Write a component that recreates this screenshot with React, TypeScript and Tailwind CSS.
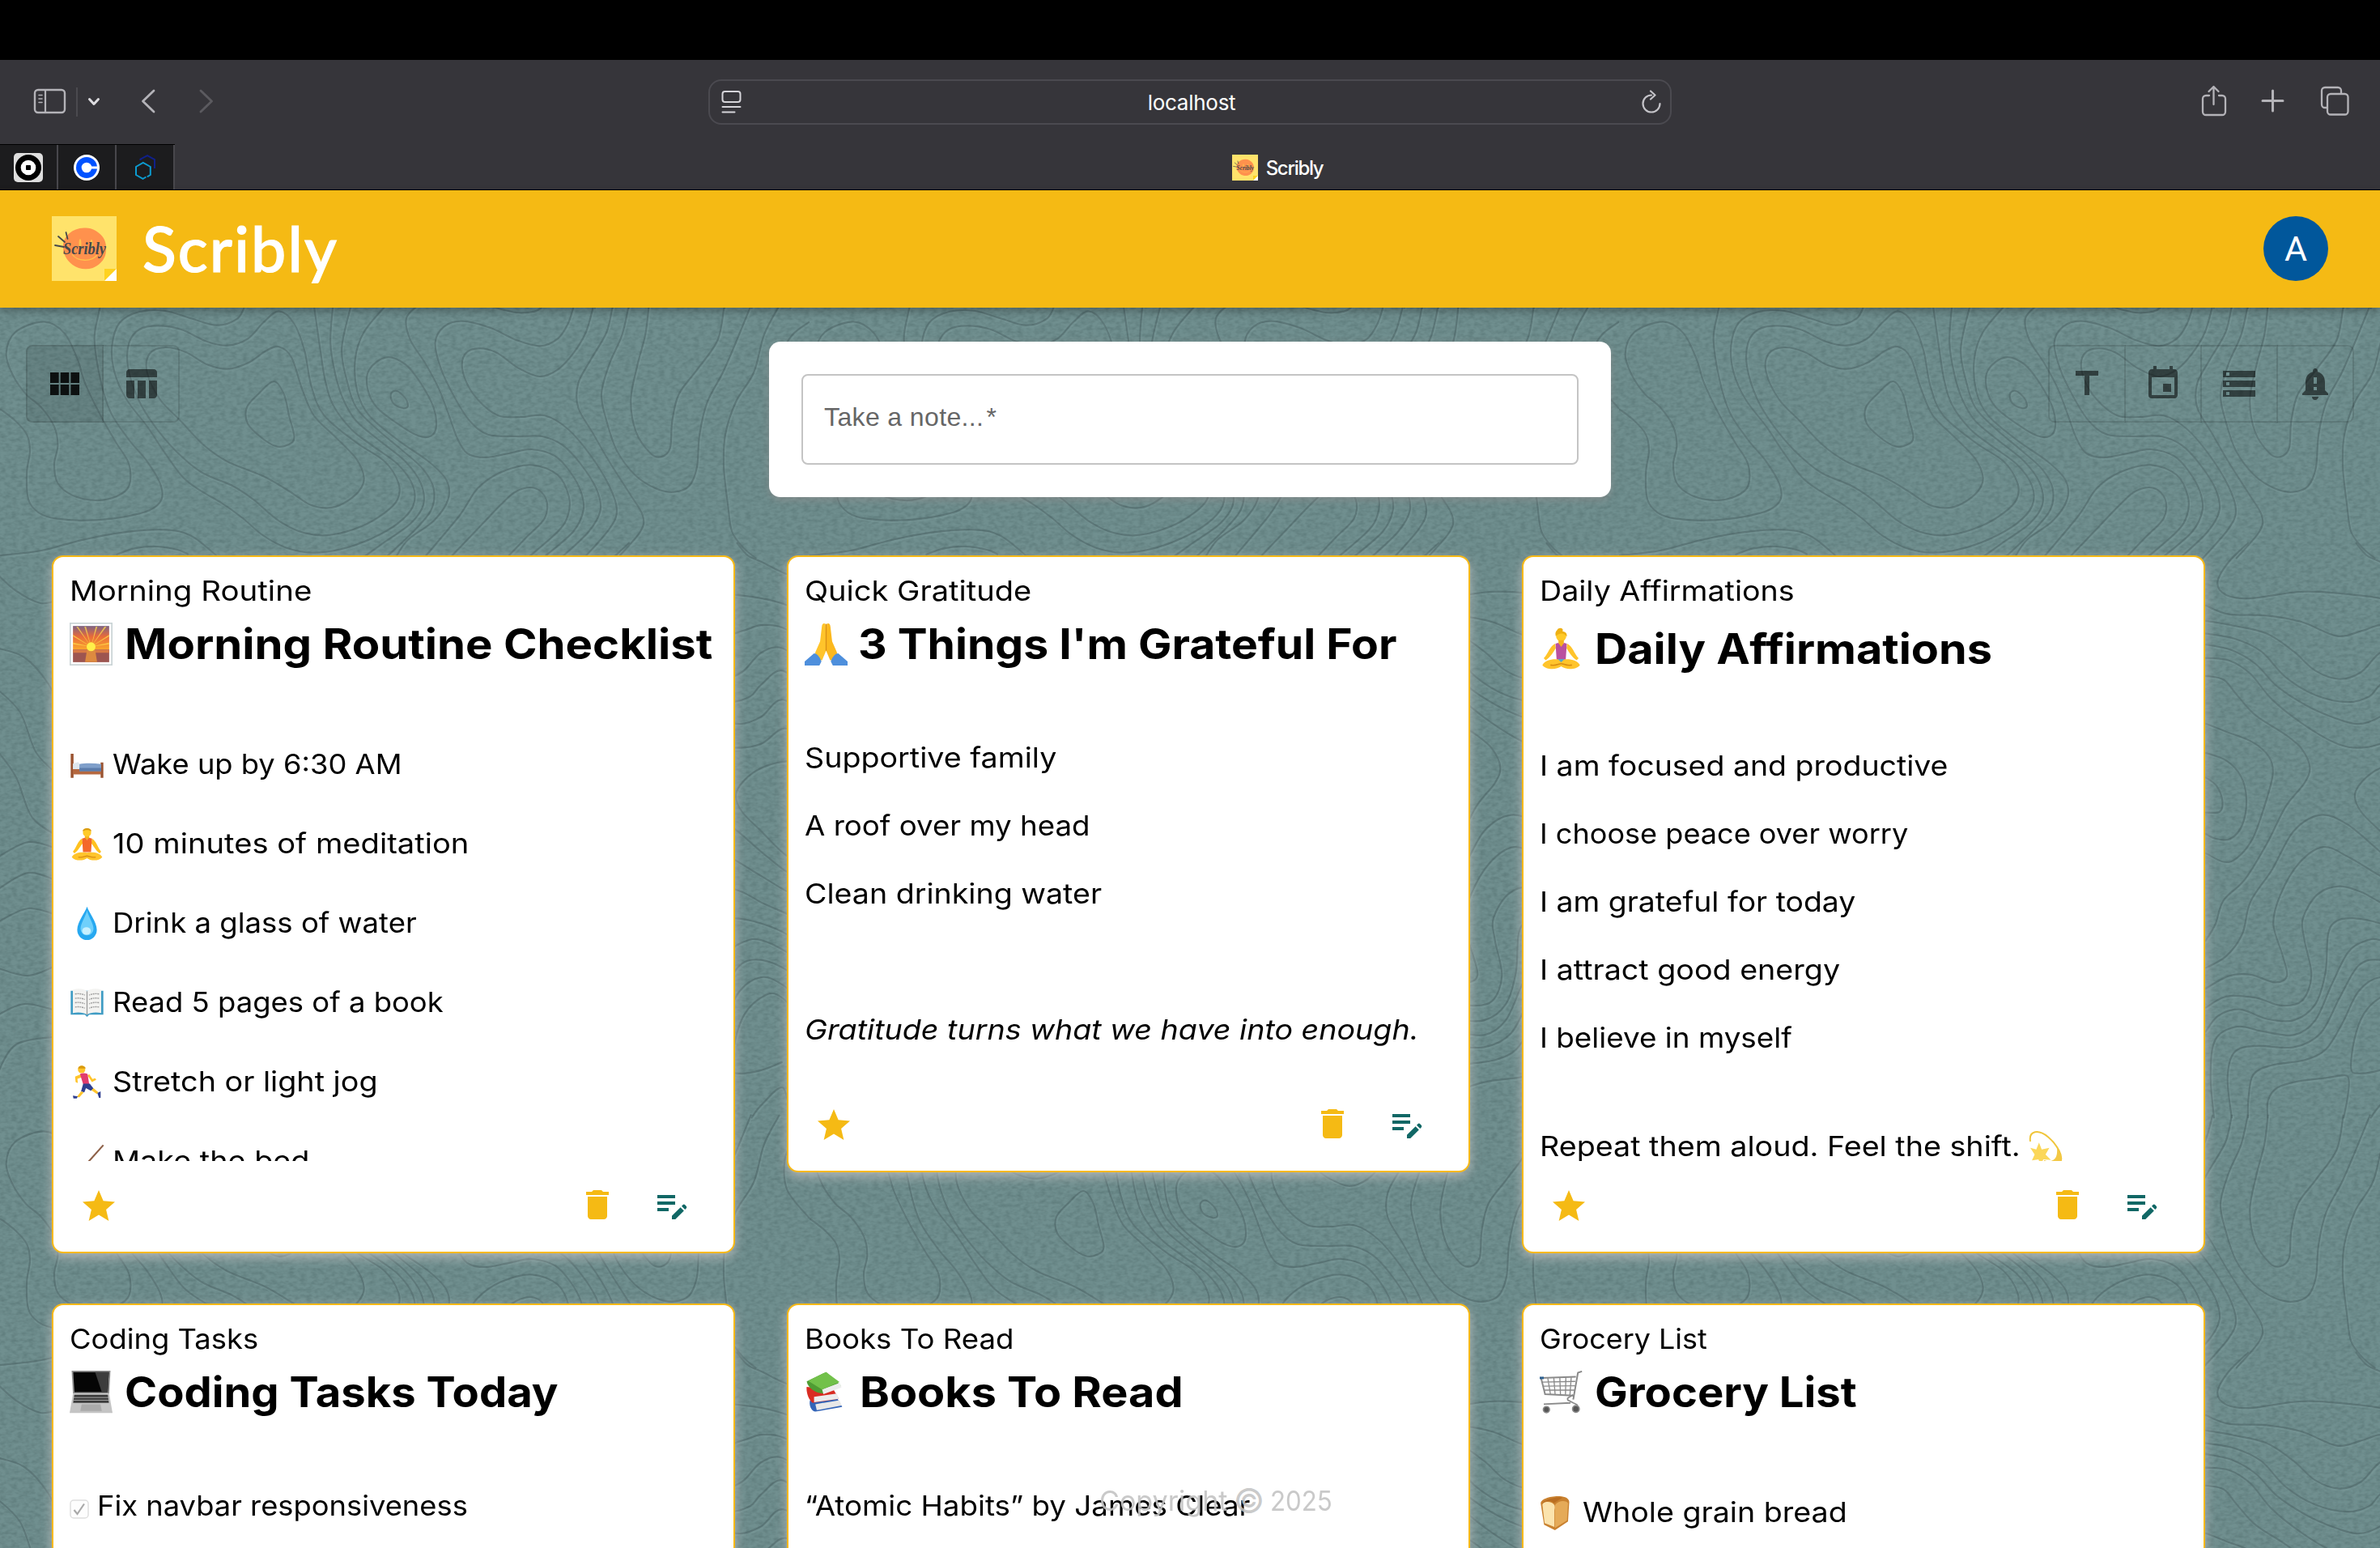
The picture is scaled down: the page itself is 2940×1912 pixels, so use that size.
import { useLayoutEffect, useRef, type ReactNode } from "react";
import {
  MdDelete,
  MdEditNote,
  MdEvent,
  MdNotificationImportant,
  MdStar,
  MdStorage,
  MdTableChart,
  MdTitle,
  MdViewModule,
} from "react-icons/md";

type Pt = [number, number];

/* ---------- Topographic background ---------- */

function smooth(points: Pt[], closed: boolean): string {
  const n = points.length;
  const at = (i: number): Pt =>
    closed ? points[(i + n) % n] : points[Math.max(0, Math.min(n - 1, i))];
  let d = `M${points[0][0].toFixed(1)} ${points[0][1].toFixed(1)}`;
  const segments = closed ? n : n - 1;
  for (let i = 0; i < segments; i++) {
    const [a, b, c, e] = [at(i - 1), at(i), at(i + 1), at(i + 2)];
    const c1 = [b[0] + (c[0] - a[0]) / 6, b[1] + (c[1] - a[1]) / 6];
    const c2 = [c[0] - (e[0] - b[0]) / 6, c[1] - (e[1] - b[1]) / 6];
    d += `C${c1[0].toFixed(1)} ${c1[1].toFixed(1)} ${c2[0].toFixed(1)} ${c2[1].toFixed(1)} ${c[0].toFixed(1)} ${c[1].toFixed(1)}`;
  }
  return d;
}

const bandClosed: Pt[][] = [
  [[12,200],[30,120],[85,82],[125,125],[150,220],[165,310],[195,430],[225,530],[250,610],[250,690],[225,730],[185,744],[140,725],[112,680],[105,610],[112,540],[105,470],[80,400],[50,350],[25,280]],
  [[250,160],[270,110],[305,97],[350,110],[400,155],[440,170],[480,145],[510,85],[540,43],[570,90],[590,190],[603,320],[628,430],[690,530],[745,600],[772,680],[770,740],[745,790],[700,840],[640,872],[590,865],[540,820],[490,740],[450,690],[390,640],[340,560],[300,470],[268,370],[248,250]],
  [[290,200],[320,177],[360,195],[400,240],[440,257],[480,235],[515,190],[540,175],[565,215],[585,330],[608,430],[650,510],[690,590],[705,660],[695,710],[665,755],[635,772],[600,760],[560,710],[510,655],[440,600],[395,540],[350,450],[310,370],[285,270]],
  [[530,303],[550,350],[560,430],[570,510],[558,538],[535,544],[505,510],[480,460],[478,400],[500,350]],
  [[748,214],[785,240],[815,310],[840,400],[845,470],[835,505],[810,505],[770,460],[730,400],[712,330],[715,260]],
  [[768,338],[785,365],[790,395],[780,402],[762,385],[757,350]],
];

const bandOpen: Pt[][] = [
  [[0,405],[30,450],[52,500],[58,560],[52,640],[55,740],[75,790],[110,812],[170,818],[240,805],[290,780],[313,740],[310,680],[285,600],[250,520],[215,420],[195,300],[183,150],[190,60],[195,20]],
  [[475,20],[460,70],[420,95],[370,70],[320,42],[270,45],[232,85],[217,170],[222,270],[245,370],[285,470],[320,570],[355,660],[390,710],[430,755],[470,810],[510,875],[555,920],[605,938],[660,925],[720,885],[770,830],[800,765],[800,690],[770,610],[720,540],[680,480],[645,390],[630,300],[620,180],[608,20]],
  [[645,20],[640,160],[650,280],[665,370],[690,450],[740,530],[785,600],[815,680],[820,760],[795,830],[740,905],[700,960]],
  [[680,20],[662,180],[672,300],[690,400],[730,480],[780,560],[820,630],[840,700],[835,780],[800,860],[745,960]],
  [[748,20],[705,120],[688,220],[692,340],[715,430],[770,520],[830,600],[865,670],[868,740],[840,820],[790,890],[765,960]],
  [[810,20],[787,70],[795,150],[825,240],[850,330],[870,430],[885,510],[905,570],[940,585],[985,570],[1030,555],[1075,580],[1105,640],[1125,710],[1130,780],[1110,860],[1050,960]],
  [[955,28],[1000,48],[1035,44],[1050,28]],
  [[1112,20],[1100,90],[1080,145],[1045,172],[1000,150],[950,105],[895,80],[860,100],[843,160],[855,260],[880,360],[910,450],[945,500],[1000,507],[1050,507],[1090,540],[1125,610],[1155,700],[1163,780],[1140,860],[1085,960]],
  [[1150,20],[1135,120],[1110,200],[1080,260],[1045,285],[1005,255],[960,195],[920,182],[897,215],[900,290],[925,370],[965,430],[1010,435],[1055,430],[1100,480],[1145,580],[1180,690],[1195,780],[1180,850],[1130,960]],
  [[1187,20],[1175,120],[1145,220],[1120,310],[1120,400],[1150,500],[1180,600],[1220,720],[1245,800],[1240,860],[1195,960]],
  [[1218,20],[1205,130],[1180,240],[1165,350],[1175,450],[1195,560],[1230,650],[1270,700],[1305,713],[1335,690],[1350,620],[1355,500],[1370,380],[1400,270],[1425,160],[1455,20]],
  [[1257,20],[1250,130],[1235,240],[1222,370],[1232,490],[1260,570],[1280,583],[1298,550],[1302,450],[1315,350],[1350,260],[1390,150],[1403,20]],
  [[1510,20],[1480,130],[1460,270],[1425,380],[1405,500],[1402,620],[1410,760],[1418,860],[1440,920],[1465,960]],
  [[1568,82],[1535,130],[1520,190],[1525,300],[1568,405]],
  [[820,960],[890,800],[925,700],[970,640],[1030,613],[1080,650],[1102,730],[1100,800],[1080,860],[1020,960]],
  [[870,960],[930,840],[970,760],[1000,710],[1035,698],[1058,740],[1055,810],[1020,880],[980,960]],
  [[0,948],[80,930],[160,890],[240,862],[320,853],[370,875],[420,950]],
  [[225,945],[260,922],[305,915],[345,928],[365,945]],
];

const stripOpen: Pt[][] = [
  [[233,0],[160,30],[118,62],[150,82],[240,87],[420,77],[560,79],[720,87],[830,100],[910,120]],
  [[630,0],[670,20],[720,30],[820,50],[910,55]],
  [[72,98],[160,112],[300,114],[430,124],[560,146],[650,138],[720,129],[800,133],[910,160]],
  [[72,122],[180,130],[300,142],[400,170],[480,200],[570,213],[650,202],[720,172],[800,165],[910,200]],
  [[72,142],[180,150],[280,170],[370,210],[480,238],[600,249],[680,240],[720,222],[800,200],[910,240]],
  [[72,159],[170,168],[260,190],[340,225],[450,255],[560,275],[640,283],[720,272],[800,245],[910,280]],
  [[72,180],[160,184],[240,205],[320,245],[430,282],[540,310],[620,320],[720,314],[810,290],[910,320]],
  [[72,208],[140,214],[190,238],[260,270],[370,300],[430,322],[460,350],[440,375],[370,412],[300,470],[220,525],[140,558],[110,595],[72,622]],
  [[72,282],[150,295],[250,312],[310,335],[323,360],[300,400],[250,460],[190,492],[140,498],[72,484]],
  [[72,328],[150,340],[205,365],[225,400],[210,440],[165,462],[110,462],[72,454]],
  [[72,366],[115,380],[136,403],[125,420],[72,421]],
  [[910,340],[800,342],[720,352],[660,370],[627,393],[650,420],[720,450],[820,490],[910,500]],
  [[72,664],[150,645],[210,610],[240,560],[320,510],[400,450],[500,425],[600,440],[720,482],[820,515],[910,530]],
  [[72,696],[160,676],[240,674],[330,686],[375,676],[360,645],[325,595],[350,550],[420,500],[510,475],[600,490],[720,520],[820,545],[910,560]],
  [[72,726],[150,708],[260,710],[350,722],[430,715],[466,675],[440,620],[435,585],[490,548],[570,536],[650,545],[720,561],[820,580],[910,600]],
  [[72,764],[120,738],[200,728],[300,743],[400,745],[480,720],[518,670],[528,610],[560,590],[620,586],[720,594],[820,612],[910,640]],
  [[105,898],[92,830],[110,775],[190,755],[280,762],[400,768],[480,745],[540,690],[600,640],[660,622],[720,620],[820,640],[910,670]],
  [[171,898],[155,835],[180,795],[260,785],[400,787],[500,765],[570,710],[640,660],[720,651],[820,668],[910,700]],
  [[910,730],[800,690],[720,678],[640,700],[580,750],[520,790],[440,807],[320,815],[250,830],[232,870],[231,898]],
  [[304,898],[305,870],[340,850],[420,840],[520,835],[590,831],[605,840],[600,865],[585,898]],
  [[910,800],[860,740],[780,705],[720,710],[660,735],[625,775],[613,820],[640,828],[720,823],[800,810]],
  [[684,898],[720,878],[800,850],[830,898]],
];

const marginOpen: Pt[][] = [
  [[-5,708],[20,730],[50,745],[75,740]],
  [[-5,800],[30,812],[60,845],[75,880]],
  [[-5,850],[25,880],[45,930],[75,960]],
  [[-5,925],[20,960],[40,1010],[75,1035]],
  [[-5,1060],[35,1040],[75,1050]],
  [[-5,1100],[35,1078],[75,1090]],
  [[-5,1140],[35,1122],[75,1132]],
  [[-5,1195],[35,1205],[75,1190]],
  [[-5,1255],[30,1240],[75,1250]],
  [[-5,1330],[20,1290],[75,1280]],
];

const bandMap = ([x, y]: Pt): Pt => [x / 1.568, y / 3 + 370 - 234];
const stripMap = ([x, y]: Pt): Pt => [700 + x / 3, y / 1.2625 + 670 - 234];
const marginMap = ([x, y]: Pt): Pt => [x, y - 234];

const bandPath =
  bandClosed.map((p) => smooth(p.map(bandMap), true)).join("") +
  bandOpen.map((p) => smooth(p.map(bandMap), false)).join("");
const stripPath =
  stripOpen.map((p) => smooth(p.map(stripMap), false)).join("") +
  marginOpen.map((p) => smooth(p.map(marginMap), false)).join("");

function Topography() {
  return (
    <svg className="absolute inset-0 h-full w-full" viewBox="0 380 2940 1532" aria-hidden="true">
      <defs>
        <filter id="grain" x="0" y="0" width="100%" height="100%" colorInterpolationFilters="sRGB">
          <feTurbulence type="fractalNoise" baseFrequency="0.14 0.24" numOctaves="2" seed="4" />
          <feColorMatrix values="0 0 0 0 0.2  0 0 0 0 0.3  0 0 0 0 0.3  1.4 0 0 0 -0.5" />
        </filter>
        <pattern id="contours" x="0" y="234" width="1000" height="1000" patternUnits="userSpaceOnUse">
          <g fill="none" strokeWidth="2.2">
            <g stroke="#84a3a3" strokeOpacity="0.25" transform="translate(1.5 2)">
              <path d={bandPath} />
              <path d={stripPath} />
              <path d={stripPath} transform="translate(0 -1000)" />
            </g>
            <g stroke="#455b5e" strokeOpacity="0.46">
              <path d={bandPath} />
              <path d={stripPath} />
              <path d={stripPath} transform="translate(0 -1000)" />
            </g>
          </g>
        </pattern>
      </defs>
      <rect y="380" width="2940" height="1532" fill="#708f8f" />
      <rect y="380" width="2940" height="1532" filter="url(#grain)" opacity="0.36" />
      <rect y="380" width="2940" height="1532" fill="url(#contours)" />
    </svg>
  );
}

/* ---------- Text fitted to a set width ---------- */

type FitProps = { w: number; className?: string; children: string };

/* Spreads the letters until the text is w pixels wide. */
function Track({ w, className = "", children }: FitProps) {
  const ref = useRef<HTMLSpanElement>(null);
  useLayoutEffect(() => {
    const el = ref.current;
    if (!el) return;
    el.style.letterSpacing = "0px";
    const natural = el.getBoundingClientRect().width;
    el.style.letterSpacing = `${(w - natural) / (children.length - 1)}px`;
  }, [w, children]);
  return (
    <span ref={ref} className={`inline-block shrink-0 whitespace-nowrap ${className}`}>
      {children}
    </span>
  );
}

/* Widens the glyphs until the text is w pixels wide. */
function Wide({ w, className = "", children }: FitProps) {
  const box = useRef<HTMLSpanElement>(null);
  const ref = useRef<HTMLSpanElement>(null);
  useLayoutEffect(() => {
    const el = ref.current;
    if (!el || !box.current) return;
    el.style.transform = "none";
    box.current.style.width = `${w}px`;
    el.style.transform = `scaleX(${w / el.offsetWidth})`;
  }, [w, children]);
  return (
    <span ref={box} className={`inline-block shrink-0 whitespace-nowrap ${className}`}>
      <span ref={ref} className="inline-block origin-left">{children}</span>
    </span>
  );
}

/* ---------- Brand ---------- */

function Logo({ className }: { className: string }) {
  return (
    <svg className={className} viewBox="0 0 80 80">
      <rect width="80" height="80" fill="#ffe36b" />
      <path d="M40 14.500c9-.8 17 4 22 10 5 6 6 14 4.500 22-1.500 8-9 15-16 17.500-8 2.500-18 1.500-25-4-8-6-12-15-11.500-24C14.500 25 25 15 40 14.500z" fill="#ff914d" />
      <ellipse cx="35" cy="34" rx="1.500" ry="6" fill="#ffc24d" />
      <ellipse cx="49" cy="34" rx="1.500" ry="5" fill="#ffc24d" />
      <path d="M25 47c6 9 24 10 31 1" fill="none" stroke="#ffc24d" strokeWidth="1.300" />
      <path d="M4 36l11 2M8 25l8 7M17.500 20l2 8" stroke="#45484b" strokeWidth="1.800" strokeLinecap="round" />
      <text x="14" y="47" fontFamily="'Liberation Serif', serif" fontStyle="italic" fontWeight="700" fontSize="20" textLength="53" lengthAdjust="spacingAndGlyphs" fill="#45484b">
        Scribly
      </text>
      <path d="M65 65h15L65 80z" fill="#ffd21f" />
      <path d="M80 65v15H65z" fill="#fff" />
    </svg>
  );
}

/* ---------- Browser chrome ---------- */

function BrowserBar() {
  return (
    <div className="h-[235px] bg-[#36353a] font-['Inter',sans-serif]">
      <div className="h-[74px] bg-black" />
      <div className="grid h-[104px] grid-cols-[875px_1190px_875px] items-start">
        <div className="flex pt-[30px]">
          <svg className="h-[48px] w-[300px]" viewBox="0 104 300 48" fill="none" stroke="#b4b3b8" strokeLinecap="round" strokeLinejoin="round">
            <rect x="43" y="111" width="37" height="28" rx="4" strokeWidth="2.400" />
            <path d="M56 111v28" strokeWidth="2.200" />
            <path d="M48 117.500h4M48 122h4M48 126.500h4" strokeWidth="1.600" />
            <path d="M95 108v36" stroke="#4b4a4f" strokeWidth="2" strokeLinecap="butt" />
            <path d="M110.500 122.500l5.500 6 5.500-6" stroke="#dddce0" strokeWidth="3" />
            <path d="M190 112l-13.500 13L190 138" strokeWidth="2.800" />
            <path d="M248 112l13.500 13L248 138" stroke="#5b5a5f" strokeWidth="2.800" />
          </svg>
        </div>
        <div className="mt-6 flex h-[56px] items-center justify-between rounded-[16px] border-2 border-[#4b4a50] pr-[10px] pl-[14px]">
          <svg className="h-[30px] w-[26px]" viewBox="0 0 26 30" fill="none" stroke="#d6d5da" strokeWidth="2" strokeLinecap="round">
            <rect x="1.500" y="2" width="22" height="13" rx="3" />
            <path d="M1.500 21h22M1.500 27.500h15" />
          </svg>
          <Track w={109} className="pt-[2px] text-[26px] leading-[30px] text-white">localhost</Track>
          <svg className="h-[30px] w-[26px]" viewBox="0 0 26 30" fill="none" stroke="#c4c3c8" strokeWidth="2.200" strokeLinecap="round" strokeLinejoin="round">
            <path d="M13 6.500a10.500 10.500 0 1 0 10.500 10.500" />
            <path d="M12 1.500l5.500 5-5.500 5" />
          </svg>
        </div>
        <div className="flex justify-end pt-[26px] pr-[36px]">
          <svg className="h-[48px] w-[190px]" viewBox="2714 100 190 48" fill="none" stroke="#b4b3b8" strokeWidth="2.300" strokeLinecap="round" strokeLinejoin="round">
            <path d="M2729 118h-4a4 4 0 0 0-4 4v16a4 4 0 0 0 4 4h20a4 4 0 0 0 4-4v-16a4 4 0 0 0-4-4h-4M2734.500 129v-21M2728.500 113l6-6 6 6" />
            <path d="M2795 124.500h25M2807.500 112v25" strokeWidth="3" />
            <rect x="2875" y="116" width="25.500" height="25.500" rx="4" />
            <path d="M2874 133h-2a4 4 0 0 1-4-4v-17a4 4 0 0 1 4-4h16a4 4 0 0 1 4 4v3" />
          </svg>
        </div>
      </div>
      <div className="flex h-[57px] border-b border-black">
        <div className="flex border-t border-black bg-[#1c1c1e]">
          <div className="flex w-[72px] items-center justify-center border-r-2 border-[#48474c]">
            <svg className="size-9" viewBox="0 0 36 36">
              <rect width="36" height="36" rx="5" fill="#dedede" />
              <circle cx="18" cy="18" r="16" fill="#000" />
              <circle cx="18" cy="18" r="9.300" fill="#fff" />
              <rect x="15" y="15" width="6" height="6" rx=".8" fill="#000" />
            </svg>
          </div>
          <div className="flex w-[72px] items-center justify-center border-r-2 border-[#48474c]">
            <svg className="size-9" viewBox="0 0 36 36">
              <circle cx="18" cy="18" r="16" fill="#fff" />
              <circle cx="18" cy="18" r="13" fill="#0052ff" />
              <circle cx="18" cy="18" r="6.300" fill="#fff" />
              <rect x="22" y="16.500" width="12" height="3" fill="#fff" />
            </svg>
          </div>
          <div className="flex w-[72px] items-center justify-center border-r-2 border-[#48474c]">
            <svg className="size-9" viewBox="0 0 36 36" fill="none" strokeWidth="2">
              <path d="M12.500 9V7.500l8.500-4.300 9 5V19" stroke="#10208a" />
              <path d="M19.500 29.500l-4 2.300L7 27V17l8.800-5 9 5v10l-4 2.300" stroke="#0c9bd0" />
            </svg>
          </div>
        </div>
        <div className="flex flex-1 items-center justify-center gap-[10px] pt-px">
          <Logo className="size-8" />
          <Track w={72} className="pt-[2px] text-[24px] leading-[30px] font-medium text-white">Scribly</Track>
        </div>
      </div>
    </div>
  );
}

/* ---------- Emoji drawings ---------- */

function Art({ children, big = false }: { children: ReactNode; big?: boolean }) {
  return (
    <svg viewBox="0 0 32 32" className={big ? "size-[53px] shrink-0" : "size-[43px] shrink-0"}>
      {children}
    </svg>
  );
}

const art: Record<string, ReactNode> = {
  sunrise: (
    <>
      <defs>
        <linearGradient id="sky" x1="0" x2="0" y1="0" y2="1">
          <stop offset="0" stopColor="#7d6484" />
          <stop offset=".45" stopColor="#e86a3a" />
          <stop offset="1" stopColor="#fba72c" />
        </linearGradient>
      </defs>
      <rect x=".5" y=".5" width="31" height="31" fill="#fff" stroke="#c9d3d5" />
      <rect x="2.500" y="2.500" width="27" height="17.500" fill="url(#sky)" />
      <path d="M16 18L5 3h1.200zM16 18L11 3h1.200zM16 18l3.500-15h1.200zM16 18L26 3h1.500zM16 18L2.500 9v1.200zM16 18l13.500-9v1.200zM16 18l-13.500-3v1.200zM16 18l13.500-3v1.200z" fill="#ffd84a" opacity=".75" />
      <rect x="2.500" y="20" width="27" height="9.500" fill="#9d5550" />
      <path d="M2.500 20h27v2.500h-27z" fill="#d97a45" />
      <path d="M13 20h6l1.500 9.500h-9z" fill="#dd8a40" />
      <circle cx="16" cy="18" r="3.300" fill="#fff04a" />
    </>
  ),
  bed: (
    <>
      <path d="M1 6h2.600v22H1zM28.500 14H31v14h-2.500z" fill="#9a5330" />
      <path d="M3 20h26v5H3z" fill="#b5683f" />
      <path d="M3 15l5-1.500 2 3.500v3H3z" fill="#dfe7ee" />
      <path d="M9 15.500c5-1 13-1 20 0V22H9z" fill="#7f9fca" />
      <path d="M9 19h20v3H9z" fill="#5b7cab" />
    </>
  ),
  yogi: (
    <>
      <path d="M14 8h4v4h-4z" fill="#f5b21c" />
      <circle cx="16" cy="5.500" r="3.800" fill="#ffca28" />
      <path d="M12 4.500C12 .5 20 .5 20 4.500c-2-1.700-6-1.700-8 0z" fill="#d99a0e" />
      <path d="M11.500 11c-4 2-5 8-8.500 12l1.500 1.500c4-3 5.500-7 7.500-9zM20.500 11c4 2 5 8 8.500 12l-1.500 1.500c-4-3-5.500-7-7.500-9z" fill="#ffc21f" />
      <path d="M11.500 11l2.500-.7 2 2 2-2 2.500 .7-.8 12.500h-7.400z" fill="#f4682a" />
      <path d="M2 28c2-4 8-5 14-4 6-1 12 0 14 4-3 4-11 3.500-14 1-3 2.500-11 3-14-1z" fill="#ffc42b" />
      <path d="M8 28c4 1 6-1 8-1s4 2 8 1" stroke="#d98d12" fill="none" />
    </>
  ),
  drop: (
    <>
      <path d="M16 .5c2 6 9 14 9 21.500a9 9.300 0 0 1-18 0C7 14.500 14 6.500 16 .5z" fill="#27a8f0" />
      <path d="M16 4c1 5 6 12 6 17a6 6 0 0 1-12 0c0-5 5-12 6-17z" fill="#6fd0fb" />
      <ellipse cx="15.500" cy="23" rx="4" ry="3.500" fill="#c6f0ff" />
    </>
  ),
  book: (
    <>
      <path d="M1 5h30v22H18l-2 2-2-2H1z" fill="#3f9cc4" />
      <path d="M3 4c5-1.500 10-1 13 1.500V27c-3-2-8-2.500-13-1.500zM29 4c-5-1.500-10-1-13 1.500V27c3-2 8-2.500 13-1.500z" fill="#f3f3f1" />
      <path d="M16 5.500V27" stroke="#9a9a9a" />
      <path d="M5 8c3-.5 6-.3 9 1M5 12c3-.5 6-.3 9 1M5 16c3-.5 6-.3 9 1M5 20c3-.5 6-.3 9 1M27 8c-3-.5-6-.3-9 1M27 12c-3-.5-6-.3-9 1M27 16c-3-.5-6-.3-9 1M27 20c-3-.5-6-.3-9 1" fill="none" stroke="#9c9c9c" strokeDasharray="1.500 .6" />
    </>
  ),
  runner: (
    <>
      <circle cx="11" cy="4.500" r="3.400" fill="#ffc42b" />
      <path d="M7.800 3.500c0-3.500 6.500-3.500 7 0z" fill="#d99a0e" />
      <path d="M10 9l-5 2 .5 5 2 1-.3-4 4.300-1.500zM16.500 10l4 6 4-2-1-1.500-2.500 .8-3-4.500z" fill="#ffc42b" />
      <path d="M9.500 8.500c2-1 5-1 7 0l1.500 9.500h-5.500z" fill="#e23b6d" />
      <path d="M12.500 17.500h6l3.500 4.500-2.500 2-4.500-2.500-1.500 4-3-1z" fill="#2f3f90" />
      <path d="M20 23.500l2-2 4.500 4-1.500 1.500zM10.500 24.500l2.500 1-4 4.500-2.500-.3z" fill="#ffc42b" />
      <path d="M25.500 26l3-1.500v6h-1.500zM3 28.500l4.500.8-1 1.700h-3z" fill="#2f3f90" />
    </>
  ),
  broom: (
    <>
      <path d="M31 1L14 20" stroke="#8d6047" strokeWidth="1.600" />
      <path d="M14 17l4 4-6 10-9-6z" fill="#d9b26a" />
    </>
  ),
  pray: (
    <>
      <path d="M15.600 1c-1.500-1-2.600 0-2.800 2L11.500 14 8 22l-1 6h6l3-7z" fill="#ffc42b" />
      <path d="M16.400 1c1.500-1 2.600 0 2.800 2l1.300 11L24 22l1 6h-6l-3-7z" fill="#fbb81e" />
      <path d="M16 1v20" stroke="#d98f16" strokeWidth=".8" />
      <path d="M7 23c2 0 4 2 5.500 6L11 32H0v-3zM25 23c-2 0-4 2-5.500 6l1.500 3h11v-3z" fill="#4e8fdc" />
    </>
  ),
  yogini: (
    <>
      <circle cx="16" cy="6.500" r="3.800" fill="#ffca28" />
      <path d="M12 6.500C11 3 13 2.500 13.500 1c2.500-1.500 4.500 0 3.500 1.800 2.500.4 3.500 1.700 3.200 4-2-2.500-5-3.300-8.200-.3z" fill="#eeb013" />
      <path d="M11.500 12c-4 2-5 7-8.500 11l1.500 1.500c4-3 5.500-6 7.500-9zM20.500 12c4 2 5 7 8.500 11l-1.500 1.500c-4-3-5.500-6-7.500-9z" fill="#ffc42b" />
      <path d="M14 9.500h4v5h-4z" fill="#f5b21c" />
      <path d="M11.800 12l2-.5 2.200 3 2.200-3 2 .5-.8 12h-6.800z" fill="#b9509f" />
      <path d="M2 28c2-4 8-5 14-4 6-1 12 0 14 4-3 4-11 3.500-14 1-3 2.500-11 3-14-1z" fill="#ffc42b" />
      <path d="M13.500 23.500h5l-2.500 2.500z" fill="#57a7c9" />
      <path d="M8 28c4 1 6-1 8-1s4 2 8 1" stroke="#d98d12" fill="none" />
    </>
  ),
  dizzy: (
    <>
      <path d="M1.500 11C0 1 9-.5 18 7s14 19 11 22.500c-3 3-9 1.500-15-.5" fill="none" stroke="#f0c53a" strokeWidth="1.500" />
      <path d="M26 17c5 8 5.500 13 2.500 14.500-4 1.500-9-.5-14.500-2.500 9 1.500 13-2 12-12z" fill="#f3c845" />
      <path d="M9.500 12l2.500 6.500 7-1.500-3.500 6 5 5-7-.5-2.500 5-2-5-6 1 2.500-5.500L1.500 17l5.500 1.500z" fill="#fbd75a" />
    </>
  ),
  laptop: (
    <>
      <path d="M1.500 0h29l-1 17h-27z" fill="#8f8f8f" />
      <path d="M2.700 1h26.600l-.9 15H3.600z" fill="#050505" />
      <path d="M19 1h10.300l-.9 15H24z" fill="#3c3c3c" />
      <path d="M2.500 17h27L32 31.500H0z" fill="#c4c4c4" />
      <path d="M3.500 18h25l.8 6H2.600z" fill="#3b3b3b" />
      <path d="M3 20h26M3 22h26" stroke="#bbb" strokeWidth=".5" />
      <path d="M9 25h14l1 5H8z" fill="#aaa" />
    </>
  ),
  books: (
    <>
      <path d="M4 22l20-2 4 7-20 3.500c-3 0-5-5-4-8.500z" fill="#3465b8" />
      <path d="M8 25l18-3 1.500 4L9 29.500z" fill="#e8e8e8" />
      <path d="M1.500 12l20 2 4 7-19.500 3c-3-2-5-8-4.500-12z" fill="#d92c22" />
      <path d="M7 19.500l17-2.500 1.500 4L7 23.500z" fill="#ececec" />
      <path d="M1.500 8L16 1l11 10-13 6C8 17 2.500 13 1.500 8z" fill="#4f9c33" />
      <path d="M13 14l13-5 1.500 3.500L14 17.500z" fill="#ededed" />
      <path d="M2.500 7.500L16 1l10 7.500-13 5.500z" fill="#72c14a" />
    </>
  ),
  cart: (
    <g fill="none" stroke="#8a8a8a">
      <path d="M31.500.5l-3 1-3.500 20M1 5.500l26-1M1 5.500l3 12 21 1" strokeWidth="1.200" />
      <path d="M1.500 8.500l25-.5M2.500 11.500l24-.3M3 14.500h23M6 5.500l2 12M10.500 5.300l1 12.500M15 5.200l.5 13M19.500 5l-.3 13M23.500 5l-1 13.500" strokeWidth=".8" />
      <path d="M25 18c-3 2-5 2-4 4l4 2c4 1.500 3 2 3 3M23 24l-20 1" strokeWidth="1.100" />
      <path d="M0 4.500h3v1.800H0z" fill="#2c5f8f" stroke="none" />
      <circle cx="5" cy="29" r="2.300" fill="#555" />
      <circle cx="27" cy="28.500" r="2.500" fill="#555" />
    </g>
  ),
  bread: (
    <>
      <path d="M1 8C0 3 12 0 20 1c5 .5 8 3 7 7l-1 16-12 8L4 27z" fill="#c9812f" />
      <path d="M2.500 9c0-4 9-4 11 0 1 3 0 3 0 6v14L4.500 25.500z" fill="#fbe3ad" />
      <path d="M14 9c3-4 9-5 12-2l-1 16-11 7z" fill="#e5aa58" />
      <path d="M2 8c1-4 12-7 19-6l-8 5c-3-3-8-2-11 1z" fill="#b96e22" />
    </>
  ),
};

/* ---------- Notes ---------- */

type Line = { text: string; w: number; icon?: string; kind?: "check" | "italic"; space?: boolean; after?: string };

type Note = {
  title: string;
  titleW: number;
  heading: string;
  headingW: number;
  icon: string;
  size: string;
  headingTop: string;
  headingGap: string;
  listTop: string;
  listGap: string;
  lines: Line[];
};

const notes: Note[] = [
  {
    title: "Morning Routine", titleW: 299, heading: "Morning Routine Checklist", headingW: 726, icon: "sunrise",
    size: "h-[862px]", headingTop: "mt-[12px]", headingGap: "gap-[15px]", listTop: "mt-[94px]", listGap: "gap-[54px]",
    lines: [
      { text: "Wake up by 6:30 AM", w: 357, icon: "bed" },
      { text: "10 minutes of meditation", w: 440, icon: "yogi" },
      { text: "Drink a glass of water", w: 376, icon: "drop" },
      { text: "Read 5 pages of a book", w: 409, icon: "book" },
      { text: "Stretch or light jog", w: 328, icon: "runner" },
      { text: "Make the bed", w: 243, icon: "broom" },
    ],
  },
  {
    title: "Quick Gratitude", titleW: 280, heading: "3 Things I'm Grateful For", headingW: 665, icon: "pray",
    size: "h-[762px]", headingTop: "mt-[12px]", headingGap: "gap-[13px]", listTop: "mt-[86px]", listGap: "gap-[40px]",
    lines: [
      { text: "Supportive family", w: 311 },
      { text: "A roof over my head", w: 352 },
      { text: "Clean drinking water", w: 367 },
      { text: "Gratitude turns what we have into enough.", w: 758, kind: "italic", space: true },
    ],
  },
  {
    title: "Daily Affirmations", titleW: 315, heading: "Daily Affirmations", headingW: 491, icon: "yogini",
    size: "h-[862px]", headingTop: "mt-[18px]", headingGap: "gap-[15px]", listTop: "mt-[90px]", listGap: "gap-[40px]",
    lines: [
      { text: "I am focused and productive", w: 505 },
      { text: "I choose peace over worry", w: 455 },
      { text: "I am grateful for today", w: 390 },
      { text: "I attract good energy", w: 371 },
      { text: "I believe in myself", w: 312 },
      { text: "Repeat them aloud. Feel the shift.", w: 594, after: "dizzy" },
    ],
  },
  {
    title: "Coding Tasks", titleW: 233, heading: "Coding Tasks Today", headingW: 536, icon: "laptop",
    size: "h-[862px]", headingTop: "mt-[12px]", headingGap: "gap-[15px]", listTop: "mt-[86px]", listGap: "gap-[40px]",
    lines: [{ text: "Fix navbar responsiveness", w: 458, kind: "check" }],
  },
  {
    title: "Books To Read", titleW: 258, heading: "Books To Read", headingW: 400, icon: "books",
    size: "h-[862px]", headingTop: "mt-[12px]", headingGap: "gap-[15px]", listTop: "mt-[86px]", listGap: "gap-[40px]",
    lines: [{ text: "“Atomic Habits” by James Clear", w: 550 }],
  },
  {
    title: "Grocery List", titleW: 207, heading: "Grocery List", headingW: 324, icon: "cart",
    size: "h-[862px]", headingTop: "mt-[12px]", headingGap: "gap-[15px]", listTop: "mt-[94px]", listGap: "gap-[40px]",
    lines: [{ text: "Whole grain bread", w: 327, icon: "bread" }],
  },
];

function NoteLine({ line }: { line: Line }) {
  const top = line.space ? "mt-[84px]" : line.after ? "mt-[50px]" : "mt-0";
  return (
    <li className={`flex h-[44px] items-center gap-[10px] leading-[44px] ${top}`}>
      {line.icon && <Art>{art[line.icon]}</Art>}
      {line.kind === "check" && (
        <svg className="mt-[8px] size-6 shrink-0" viewBox="0 0 24 24">
          <rect x="1" y="1" width="22" height="22" rx="4" fill="#fdfdfd" stroke="#dedede" strokeWidth="1.500" />
          <path d="M5.500 13l4 5L18 5.500" fill="none" stroke="#a9a9a9" strokeWidth="2.200" />
        </svg>
      )}
      <Wide w={line.w} className={line.kind === "italic" ? "italic" : ""}>{line.text}</Wide>
      {line.after && <Art>{art[line.after]}</Art>}
    </li>
  );
}

function NoteCard({ note }: { note: Note }) {
  return (
    <article className={`flex flex-col rounded-[14px] border-2 border-[#f7b916] bg-white text-[34.5px] text-black shadow-[0_5px_14px_rgba(190,190,190,0.85)] ${note.size}`}>
      <div className="min-h-0 flex-1 overflow-hidden px-5 pt-5">
        <div className="h-[42px] leading-[43px]"><Wide w={note.titleW}>{note.title}</Wide></div>
        <h2 className={`flex h-[66px] items-center text-[52px] leading-[67px] font-bold ${note.headingTop} ${note.headingGap}`}>
          <Art big>{art[note.icon]}</Art>
          <Wide w={note.headingW}>{note.heading}</Wide>
        </h2>
        <ul className={`flex flex-col ${note.listTop} ${note.listGap}`}>
          {note.lines.map((line) => <NoteLine key={line.text} line={line} />)}
        </ul>
      </div>
      <div className="flex h-[112px] shrink-0 items-start pt-[30px] pr-[52px] pl-[32px] text-[48px]">
        <MdStar className="mt-[2px] mr-auto text-[#f5ba14]" />
        <MdDelete className="mr-[44px] text-[#f5ba14]" />
        <MdEditNote className="text-[#106765]" />
      </div>
    </article>
  );
}

/* ---------- Toolbar ---------- */

function ToolGroup({ icons, selected }: { icons: ReactNode[]; selected?: number }) {
  return (
    <div className="mt-1 flex h-[96px] text-[48px] text-black/54">
      {icons.map((icon, i) => {
        const edge = i === 0 ? "rounded-l-lg border-l-2" : "-ml-[2px] border-l-2 border-l-transparent";
        const end = i === icons.length - 1 ? "rounded-r-lg" : "";
        return (
          <button
            key={i}
            className={`flex size-[96px] items-center justify-center border-2 border-black/12 ${edge} ${end} ${i === selected ? "bg-black/8 text-black/87" : ""}`}
          >
            {icon}
          </button>
        );
      })}
    </div>
  );
}

export default function App() {
  return (
    <div className="relative h-[1912px] w-[2940px] overflow-hidden font-['Inter',sans-serif]">
      <BrowserBar />
      <header className="relative z-10 flex h-[145px] items-center bg-[#f5ba14] px-16 pb-px shadow-[0_4px_10px_rgba(0,0,0,0.3)]">
        <Logo className="size-20 shrink-0" />
        <Track w={240} className="-mt-[2px] ml-[32px] font-['Lato',sans-serif] text-[77px] leading-[100px] font-medium text-white [-webkit-text-stroke:1.2px_white]">Scribly</Track>
        <div className="ml-auto flex size-20 items-center justify-center rounded-full bg-[#01579b] font-['Roboto',sans-serif] text-[43px] leading-none text-white">
          A
        </div>
      </header>
      <main className="relative h-[1532px]">
        <Topography />
        <div className="relative pt-[42px]">
          <div className="grid grid-cols-[1fr_1040px_1fr] px-8">
            <ToolGroup icons={[<MdViewModule key="m" />, <MdTableChart key="t" />]} selected={0} />
            <div className="h-[192px] rounded-[14px] bg-white p-10 shadow-[0_4px_10px_rgba(150,140,140,0.5)]">
              <div className="flex h-[112px] items-center gap-[3px] rounded-lg border-2 border-[#c4c4c4] px-[26px] pb-[6px] font-['Liberation_Sans',Arial,sans-serif] text-[32px] text-[#666]">
                <Track w={197}>Take a note...</Track>
                <span>*</span>
              </div>
            </div>
            <div className="flex justify-end">
              <ToolGroup icons={[<MdTitle key="t" />, <MdEvent key="e" />, <MdStorage key="s" />, <MdNotificationImportant key="n" />]} />
            </div>
          </div>
          <div className="mt-[72px] grid grid-cols-[repeat(3,844px)] items-start gap-x-16 gap-y-[62px] pl-16">
            {notes.map((note) => <NoteCard key={note.title} note={note} />)}
          </div>
        </div>
      </main>
      <footer className="absolute inset-x-0 bottom-[34px] flex h-[48px] items-center justify-center pl-[64px] text-[34.5px] leading-[48px] text-[#c3c3c3]/90">
        <Wide w={158}>Copyright</Wide>
        <span className="mr-[7px] ml-[8px] text-[42px]">©</span>
        <Wide w={77}>2025</Wide>
      </footer>
    </div>
  );
}
